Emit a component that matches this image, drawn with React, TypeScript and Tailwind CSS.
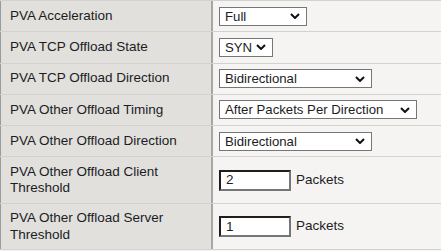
const ROWS: { label: string; kind: "select" | "input"; value: string; width?: string }[] = [
  { label: "PVA Acceleration", kind: "select", value: "Full", width: "w-[88px]" },
  { label: "PVA TCP Offload State", kind: "select", value: "SYN", width: "w-[54px]" },
  { label: "PVA TCP Offload Direction", kind: "select", value: "Bidirectional", width: "w-[153px]" },
  { label: "PVA Other Offload Timing", kind: "select", value: "After Packets Per Direction", width: "w-[198px]" },
  { label: "PVA Other Offload Direction", kind: "select", value: "Bidirectional", width: "w-[153px]" },
  { label: "PVA Other Offload Client Threshold", kind: "input", value: "2" },
  { label: "PVA Other Offload Server Threshold", kind: "input", value: "1" },
];

const Chevron = () => (
  <svg width="10" height="6" viewBox="0 0 10 6" className="shrink-0">
    <path d="M1 1 L5 5 L9 1" fill="none" stroke="#111" strokeWidth="2" />
  </svg>
);

const Select = ({ value, width }: { value: string; width?: string }) => (
  <div
    className={`flex h-[19px] items-center justify-between border border-[#767676] bg-white pl-[5px] pr-[6px] text-[13.2px] ${width}`}
  >
    <span className="whitespace-nowrap leading-none">{value}</span>
    <Chevron />
  </div>
);

const NumberInput = ({ value }: { value: string }) => (
  <div className="flex items-center gap-[5px]">
    <div className="flex h-[21px] w-[72px] items-center border-2 border-t-[#1e1e1e] border-l-[#1e1e1e] border-b-[#767676] border-r-[#767676] bg-white pl-[5px]">
      <span className="leading-none">{value}</span>
    </div>
    <span>Packets</span>
  </div>
);

export default function App() {
  return (
    <div
      className="w-[441px] h-[251px] overflow-hidden bg-[#f5f4f2] text-[13.5px] text-[#1c1c24]"
      style={{ fontFamily: '"Liberation Sans", Arial, sans-serif' }}
    >
      <div className="border-t border-[#d3d2cf]">
        {ROWS.map((row) => (
          <div
            key={row.label}
            className={`flex border-b border-[#d3d2cf] ${row.kind === "input" ? "h-[46.5px]" : "h-[31.25px]"}`}
          >
            <div className="flex w-[213px] shrink-0 items-center border-l border-r-2 border-l-[#9c9c9c] border-r-[#a8a7a4] bg-[#e1e0dd] pl-[9px] pr-[24px] leading-[16.5px]">
              {row.label}
            </div>
            <div className="flex flex-1 items-center bg-[#f5f4f2] pl-[6px]">
              {row.kind === "select" ? (
                <Select value={row.value} width={row.width} />
              ) : (
                <NumberInput value={row.value} />
              )}
            </div>
          </div>
        ))}
      </div>
    </div>
  );
}
